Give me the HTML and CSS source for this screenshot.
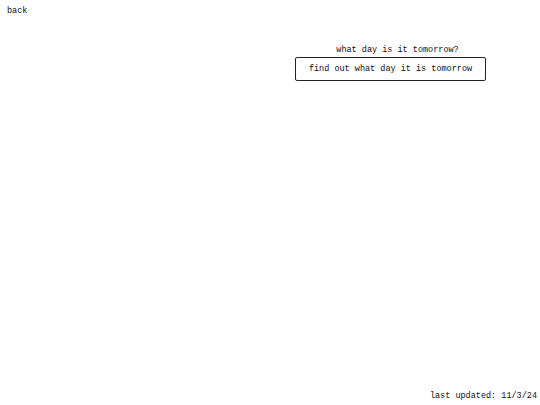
FILE: index.html
```html
<!DOCTYPE html>
<html>
<head>
<meta charset="utf-8">
<link rel="stylesheet" href="styles.css">
</head>
<body>
<div class="page">
  <a class="back" href="#">back</a>
  <div class="main">
    <div class="card">
      <p class="question">what day is it tomorrow?</p>
      <button class="btn">find out what day it is tomorrow</button>
    </div>
  </div>
  <footer class="footer">last updated: 11/3/24</footer>
</div>
</body>
</html>
```
FILE: styles.css
```css
html, body {
  margin: 0;
  padding: 0;
  background: #fff;
}
body {
  font-family: "Liberation Mono", monospace;
  font-size: 8.5px;
  color: #111;
}
.page {
  height: 405px;
  display: flex;
  flex-direction: column;
  padding: 6px 3px 0 7px;
  box-sizing: border-box;
}
.back {
  color: #111;
  text-decoration: none;
  align-self: flex-start;
}
.main {
  display: flex;
  justify-content: flex-end;
  padding-right: 51px;
  margin-top: 29px;
}
.card {
  display: flex;
  flex-direction: column;
  align-items: center;
  gap: 2px;
}
.question {
  margin: 0;
  padding-left: 14px;
}
.btn {
  font-family: "Liberation Mono", monospace;
  font-size: 8.5px;
  color: #111;
  background: #fff;
  border: 1px solid #222;
  border-radius: 2px;
  width: 191px;
  height: 24px;
  padding: 0;
}
.footer {
  margin-top: auto;
  align-self: flex-end;
  padding-bottom: 4px;
}
```
